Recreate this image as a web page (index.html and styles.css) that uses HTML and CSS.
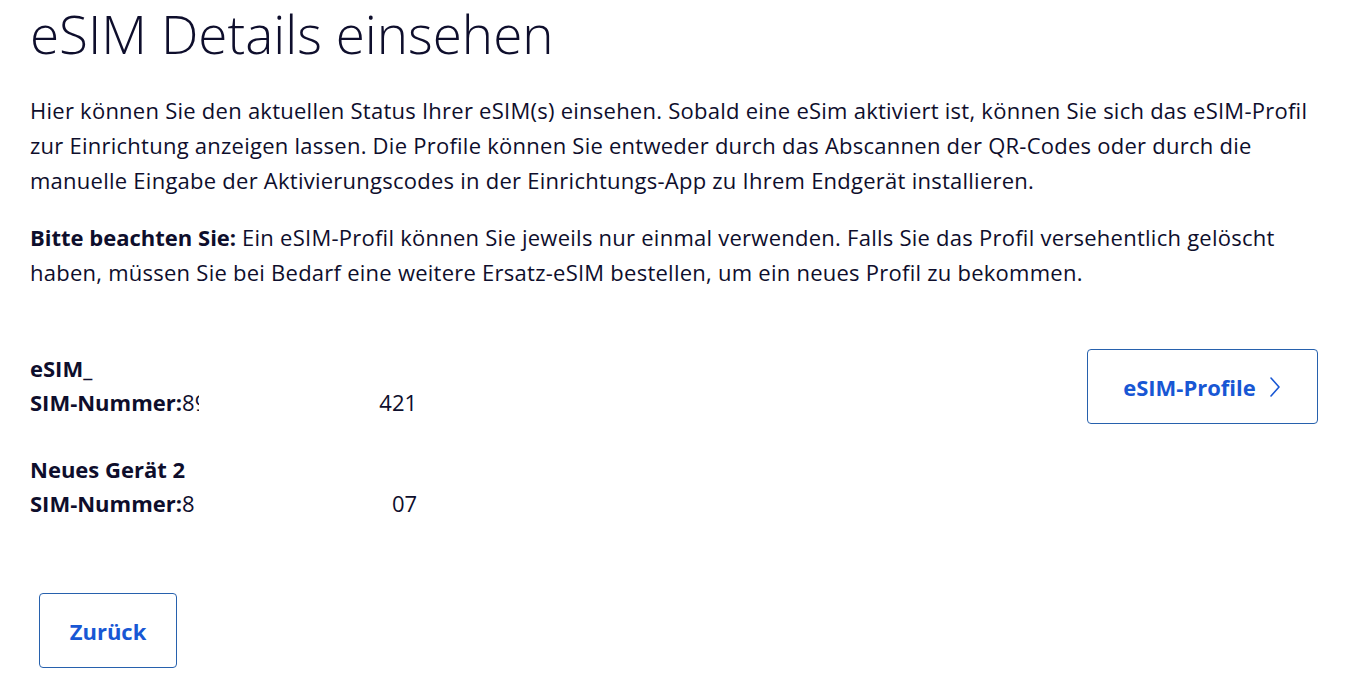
FILE: index.html
```html
<!DOCTYPE html>
<html lang="de">
<head>
<meta charset="utf-8">
<title>eSIM Details einsehen</title>
<link rel="stylesheet" href="styles.css">
</head>
<body>
<main class="page">
  <h1 class="title">eSIM Details einsehen</h1>
  <p class="intro">Hier können Sie den aktuellen Status Ihrer eSIM(s) einsehen. Sobald eine eSim aktiviert ist, können Sie sich das eSIM-Profil zur Einrichtung anzeigen lassen. Die Profile können Sie entweder durch das Abscannen der QR-Codes oder durch die manuelle Eingabe der Aktivierungscodes in der Einrichtungs-App zu Ihrem Endgerät installieren.</p>
  <p class="intro note"><strong>Bitte beachten Sie:</strong> Ein eSIM-Profil können Sie jeweils nur einmal verwenden. Falls Sie das Profil versehentlich gelöscht haben, müssen Sie bei Bedarf eine weitere Ersatz-eSIM bestellen, um ein neues Profil zu bekommen.</p>

  <section class="sims">
    <div class="sim-list">
      <div class="sim">
        <div class="sim-name">eSIM_</div>
        <div class="sim-number"><span class="label">SIM-Nummer:</span><span class="num"><span class="num-start clip">89</span><span class="num-end">421</span></span></div>
      </div>
      <div class="sim">
        <div class="sim-name">Neues Gerät 2</div>
        <div class="sim-number"><span class="label">SIM-Nummer:</span><span class="num"><span class="num-start">8</span><span class="num-end">07</span></span></div>
      </div>
    </div>
    <button class="btn btn-profile" type="button">eSIM-Profile
      <svg class="chev" width="14" height="22" viewBox="0 0 14 22"><path d="M3 2 L11 11 L3 20" fill="none" stroke="currentColor" stroke-width="1.6" stroke-linecap="round" stroke-linejoin="round"/></svg>
    </button>
  </section>

  <div class="actions">
    <button class="btn btn-back" type="button">Zurück</button>
  </div>
</main>
</body>
</html>
```

FILE: styles.css
```css
html, body {
  margin: 0;
  padding: 0;
  background: #ffffff;
}
body {
  font-family: "Open Sans", "Noto Sans", sans-serif;
  color: #0e0e2c;
}
.page {
  padding: 0 50px 0 30px;
  width: 1288px;
}
.title {
  font-weight: 300;
  font-size: 53px;
  line-height: 68px;
  margin: 0;
  letter-spacing: 0;
}
.intro {
  font-size: 22px;
  line-height: 35px;
  margin: 25px 0 0;
  letter-spacing: 0.25px;
}
.intro.note {
  margin-top: 22px;
}
.intro strong {
  font-weight: 700;
  letter-spacing: 0;
}
.sims {
  display: flex;
  justify-content: space-between;
  align-items: flex-start;
  margin-top: 61px;
}
.sim-list {
  display: flex;
  flex-direction: column;
  gap: 33px;
}
.sim {
  font-size: 22px;
  line-height: 34px;
}
.sim-name {
  font-weight: 700;
}
.sim-number {
  display: flex;
}
.label {
  font-weight: 700;
}
.num {
  display: flex;
  justify-content: space-between;
  width: 235px;
}
.clip {
  display: inline-block;
  width: 17px;
  overflow: hidden;
  white-space: nowrap;
}
.btn {
  font-family: "Open Sans", "Noto Sans", sans-serif;
  font-weight: 700;
  font-size: 22px;
  color: #1857d4;
  background: #ffffff;
  border: 1px solid #2761ad;
  border-radius: 4px;
  height: 75px;
  display: inline-flex;
  align-items: center;
  justify-content: center;
  gap: 12px;
  padding: 0 20px;
  cursor: pointer;
}
.btn-profile {
  width: 231px;
  margin-top: -2px;
}
.chev {
  display: block;
}
.actions {
  margin-top: 73px;
  padding-left: 9px;
}
.btn-back {
  width: 138px;
}
```
